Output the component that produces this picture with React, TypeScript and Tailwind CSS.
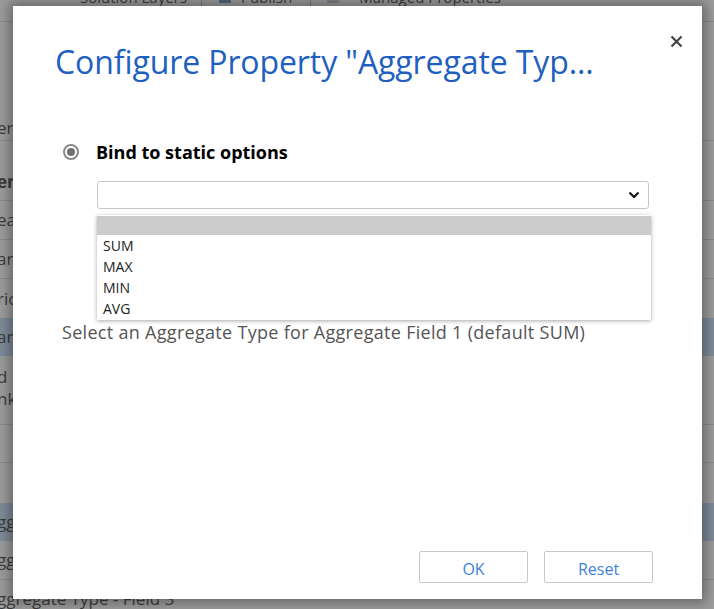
import React from "react";

type Row = { h: number; text?: string; bold?: boolean; hl?: boolean; line?: boolean; align?: string };

const rows: Row[] = [
  { h: 93, line: false },
  { h: 26, text: "era", line: true },
  { h: 60, text: "ent", bold: true, line: true, align: "items-end pb-[8px]" },
  { h: 39, text: "ea", line: true },
  { h: 39, text: "an", line: true },
  { h: 39, text: "ric" },
  { h: 38, text: "an", hl: true },
  { h: 31, text: "d", align: "items-end" },
  { h: 38, text: "nk", line: true, align: "items-start pt-[2px]" },
  { h: 38, line: true },
  { h: 40 },
  { h: 38, text: "gg", hl: true },
  { h: 39, text: "gg", line: true },
  { h: 29, text: "ggregate Type - Field 3", align: "items-end" },
];

export default function App() {
  return (
    <div className="relative w-[714px] h-[609px] overflow-hidden bg-[#9d9d9d]" style={{ fontFamily: '"Open Sans", "Noto Sans", sans-serif' }}>
      {/* background page (dimmed) */}
      <div className="absolute inset-0 flex flex-col text-[17px] text-[#3c3c3c]">
        <div className="h-[22px] border-b border-[#8a8a8a] relative">
          <div className="flex items-start pl-[80px] -mt-[13px] text-[15px] leading-[20px] whitespace-nowrap">
            <span>Solution Layers</span>
            <span className="ml-[14px] w-px h-[20px] bg-[#7a7a7a]" />
            <span className="ml-[17px] mt-[4px] w-[12px] h-[12px] bg-[#55657a]" />
            <span className="ml-[10px]">Publish</span>
            <span className="ml-[18px] w-px h-[20px] bg-[#7a7a7a]" />
            <span className="ml-[16px] mt-[4px] w-[12px] h-[12px] bg-[#7d8188]" />
            <span className="ml-[20px]">Managed Properties</span>
          </div>
        </div>
        {rows.map((r, i) => (
          <div
            key={i}
            className={`flex ${r.align ?? "items-center"} ${r.line ? "border-b border-[#8c8c8c]" : ""} ${r.hl ? "bg-[#7f8c99]" : ""} ${r.bold ? "font-bold" : ""} shrink-0 whitespace-nowrap`}
            style={{ height: r.h }}
          >
            {r.text && <span className="-ml-[3px] leading-[20px]">{r.text}</span>}
          </div>
        ))}
      </div>

      {/* modal */}
      <div className="absolute left-[13px] top-[6px] w-[689px] h-[593px] bg-white shadow-[0_0_12px_4px_rgba(0,0,0,0.35)] flex flex-col">
        <button className="absolute right-[18px] top-[27px] w-[16px] h-[16px] flex items-center justify-center">
          <svg width="13" height="13" viewBox="0 0 13 13">
            <path d="M1.5 1.5 L11.5 11.5 M11.5 1.5 L1.5 11.5" stroke="#444" strokeWidth="2.2" />
          </svg>
        </button>
        <h1 className="pl-[42px] pt-[34px] text-[32px] leading-[44px] text-[#1f5fbf] tracking-[-0.1px] whitespace-nowrap">
          Configure Property "Aggregate Typ...
        </h1>

        <div className="mt-[56px] pl-[50px] flex items-center gap-[17px]">
          <span className="w-[16px] h-[16px] rounded-full border-[2px] border-[#8a8a8a] flex items-center justify-center">
            <span className="w-[8px] h-[8px] rounded-full bg-[#6f6f6f]" />
          </span>
          <span className="text-[18px] font-bold text-black leading-[24px]">Bind to static options</span>
        </div>

        <div className="relative ml-[84px] mr-[53px] mt-[17px]">
          <div className="h-[28px] border border-[#c6c6c6] rounded-[3px] flex items-center justify-end pr-[8px]">
            <svg width="12" height="8" viewBox="0 0 12 8">
              <path d="M1.5 1.5 L6 6 L10.5 1.5" fill="none" stroke="#111" strokeWidth="2" />
            </svg>
          </div>
          <div className="absolute left-0 -right-[2px] top-[34px] bg-white shadow-[0_1px_4px_rgba(0,0,0,0.35)] text-[14px] text-[#222] leading-[21px] pb-[1px]">
            <div className="h-[19px] bg-[#cccccc] mt-[1px]" />
            <div>
              <div className="pl-[6px]">SUM</div>
              <div className="pl-[6px]">MAX</div>
              <div className="pl-[6px]">MIN</div>
              <div className="pl-[6px]">AVG</div>
            </div>
          </div>
        </div>

        <p className="ml-[49px] mt-[111px] text-[18px] leading-[24px] text-[#555] tracking-[0.3px] whitespace-nowrap">
          Select an Aggregate Type for Aggregate Field 1 (default SUM)
        </p>

        <div className="mt-auto mb-[16px] flex justify-end gap-[16px] pr-[49px]">
          <button className="w-[109px] h-[32px] border border-[#c8c8c8] rounded-[2px] text-[16px] text-[#3f7fd9] pt-[3px]">OK</button>
          <button className="w-[109px] h-[32px] border border-[#c8c8c8] rounded-[2px] text-[16px] text-[#3f7fd9] pt-[3px]">Reset</button>
        </div>
      </div>
    </div>
  );
}
